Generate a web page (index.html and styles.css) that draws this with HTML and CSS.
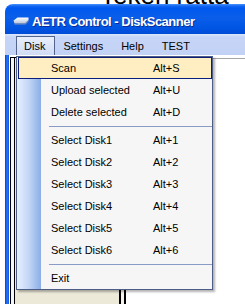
FILE: index.html
```html
<!DOCTYPE html>
<html>
<head>
<meta charset="utf-8">
<link rel="stylesheet" href="styles.css">
</head>
<body>
<div class="bgtext"><span>Teken ratta</span></div>
<div class="window">
  <div class="titlebar">
    <svg class="icon" width="16" height="8" viewBox="0 0 16 8">
      <defs>
        <linearGradient id="dg" x1="0" y1="0" x2="0" y2="1">
          <stop offset="0" stop-color="#ffffff"/>
          <stop offset="1" stop-color="#b8c4d8"/>
        </linearGradient>
      </defs>
      <path d="M0.5 3.5 L4.5 0.5 H15.5 V3 L12 6.5 H1.5 Z" fill="url(#dg)"/>
      <path d="M1.5 6.5 H12 L15.5 3 V4.5 L12.5 7.5 H1.5 Z" fill="#8090b0"/>
    </svg>
    <div class="title">AETR Control - DiskScanner</div>
  </div>
  <div class="menubar">
    <div class="mitem open">Disk</div>
    <div class="mitem">Settings</div>
    <div class="mitem">Help</div>
    <div class="mitem">TEST</div>
  </div>
  <div class="client">
    <div class="frame-l"></div>
    <div class="body-area">
      <div class="lpane"><div class="lpane-in"></div></div>
      <div class="splitter"></div>
      <div class="rpane"></div>
    </div>
  </div>
</div>
<div class="dropdown">
  <div class="item hl"><span class="label">Scan</span><span>Alt+S</span></div>
  <div class="item"><span class="label">Upload selected</span><span>Alt+U</span></div>
  <div class="item"><span class="label">Delete selected</span><span>Alt+D</span></div>
  <div class="sep"></div>
  <div class="item"><span class="label">Select Disk1</span><span>Alt+1</span></div>
  <div class="item"><span class="label">Select Disk2</span><span>Alt+2</span></div>
  <div class="item"><span class="label">Select Disk3</span><span>Alt+3</span></div>
  <div class="item"><span class="label">Select Disk4</span><span>Alt+4</span></div>
  <div class="item"><span class="label">Select Disk5</span><span>Alt+5</span></div>
  <div class="item"><span class="label">Select Disk6</span><span>Alt+6</span></div>
  <div class="sep"></div>
  <div class="item"><span class="label">Exit</span></div>
</div>
</body>
</html>
```
FILE: styles.css
```css
html, body {
  margin: 0;
  padding: 0;
}
body {
  width: 245px;
  height: 304px;
  overflow: hidden;
  background: #fff;
  font-family: "Liberation Sans", Arial, sans-serif;
  position: relative;
}
.bgtext {
  height: 4px;
  overflow: hidden;
  padding-left: 100px;
}
.bgtext span {
  display: block;
  font-size: 26px;
  line-height: 26px;
  margin-top: -18px;
  white-space: nowrap;
  color: #000;
}
.window {
  margin-left: 5px;
  height: 300px;
  display: flex;
  flex-direction: column;
  border-radius: 8px 0 0 0;
  overflow: hidden;
  background: #fff;
}
.titlebar {
  height: 30px;
  flex: none;
  box-sizing: border-box;
  display: flex;
  align-items: flex-start;
  padding: 10px 0 0 8px;
  background: linear-gradient(#4a93fb 0, #1467f2 2px, #0058ee 4px, #0a5ee9 45%, #0055e3 80%, #004bd6 100%);
}
.icon {
  display: block;
  margin-top: 3px;
  flex: none;
}
.title {
  margin-left: 3px;
  color: #fff;
  font-weight: bold;
  font-size: 13px;
  line-height: 16px;
  letter-spacing: -0.5px;
  white-space: nowrap;
  text-shadow: 1px 1px 0 #0b2c9a;
}
.menubar {
  height: 21px;
  flex: none;
  box-sizing: border-box;
  display: flex;
  padding: 2px 0 0 11px;
  background: linear-gradient(#dce6fb 0, #c6d5f7 3px, #c2d2f5 100%);
  font-size: 11px;
  color: #000;
}
.mitem {
  padding: 0 9px 0 7px;
  border: 1px solid transparent;
  border-bottom: 0;
  line-height: 18px;
  white-space: nowrap;
}
.mitem.open {
  border-color: #55648c;
  background: linear-gradient(#e8eefb, #d0dcf5);
}
.client {
  flex: 1;
  display: flex;
}
.frame-l {
  width: 4px;
  flex: none;
  background: linear-gradient(to right, #0a3dcc, #2a78f4 50%, #0a5aea);
}
.body-area {
  flex: 1;
  display: flex;
  padding-top: 2px;
  background: #fff;
}
.lpane {
  margin-left: 1px;
  width: 105px;
  flex: none;
  border-left: 1px solid #000;
  border-top: 1px solid #000;
  padding-left: 3px;
  display: flex;
  background: #f4f6fb;
}
.lpane-in {
  flex: 1;
  border-left: 1px solid #000;
  background: #ece9d8;
}
.splitter {
  width: 3px;
  flex: none;
  border-left: 2px solid #000;
  border-right: 2px solid #000;
  background: #f5f3ea;
}
.rpane {
  flex: 1;
  margin-top: 1px;
  border-top: 1px solid #a7a7a7;
  background: #fff;
}
.dropdown {
  position: absolute;
  left: 16px;
  top: 56px;
  width: 197px;
  box-sizing: border-box;
  border: 1px solid #4e5d88;
  background: linear-gradient(to right, #e6f0ff 0, #c2d6f5 12px, #8aaee6 24px, #f6f6f6 24px);
  box-shadow: 2px 2px 2px rgba(0, 0, 0, 0.3);
  font-size: 11px;
  color: #000;
}
.item {
  height: 22px;
  box-sizing: border-box;
  display: flex;
  align-items: center;
  padding-left: 34px;
  white-space: nowrap;
}
.item .label {
  width: 102px;
  flex: none;
}
.item.hl {
  margin-left: 1px;
  padding-left: 32px;
  border: 1px solid #0b1f78;
  background: #ffeec2;
}
.sep {
  height: 6px;
  box-sizing: border-box;
  padding: 3px 0 0 32px;
}
.sep::after {
  content: "";
  display: block;
  height: 1px;
  background: #8a9bc6;
}
```
